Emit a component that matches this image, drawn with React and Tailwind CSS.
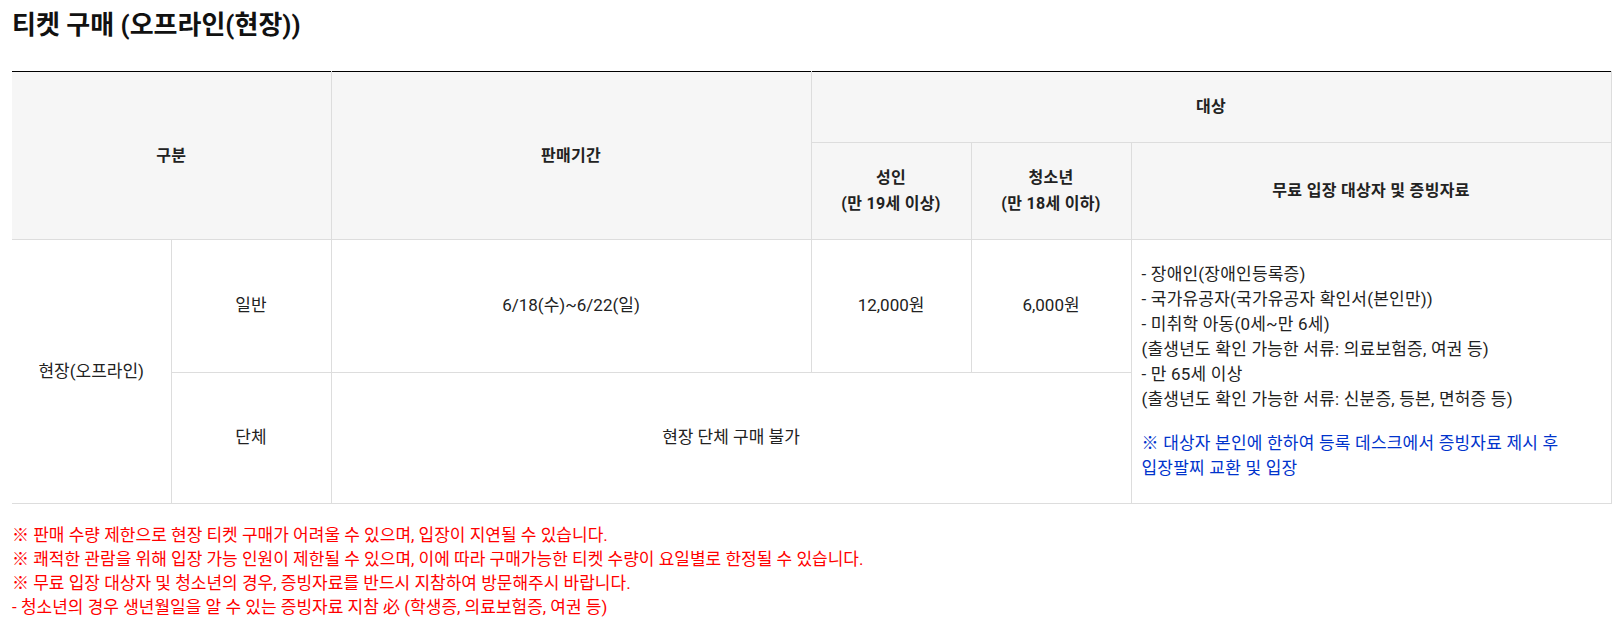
import React from 'react';

const th = 'border-r border-b border-[#dddddd] bg-[#f6f6f6] text-[16px] tracking-[0.3px] font-bold leading-[26px] text-[#222222] py-[22px] align-middle text-center';
const td = 'border-r border-b border-[#dddddd] text-[17px] leading-[25px] text-[#222222] align-middle text-center';

const freeList = [
	'- 장애인(장애인등록증)',
	'- 국가유공자(국가유공자 확인서(본인만))',
	'- 미취학 아동(0세~만 6세)',
	'(출생년도 확인 가능한 서류: 의료보험증, 여권 등)',
	'- 만 65세 이상',
	'(출생년도 확인 가능한 서류: 신분증, 등본, 면허증 등)',
];

const notes = [
	'※ 판매 수량 제한으로 현장 티켓 구매가 어려울 수 있으며, 입장이 지연될 수 있습니다.',
	'※ 쾌적한 관람을 위해 입장 가능 인원이 제한될 수 있으며, 이에 따라 구매가능한 티켓 수량이 요일별로 한정될 수 있습니다.',
	'※ 무료 입장 대상자 및 청소년의 경우, 증빙자료를 반드시 지참하여 방문해주시 바랍니다.',
	'- 청소년의 경우 생년월일을 알 수 있는 증빙자료 지참 必 (학생증, 의료보험증, 여권 등)',
];

export default function App() {
	return (
		<div
			className="min-h-screen bg-white pl-3 pr-[5px] pt-2"
			style={{ fontFamily: 'Roboto, "Noto Sans CJK KR", sans-serif' }}
		>
			<h1 className="text-[26px] font-bold leading-[34px] text-[#111111] mb-[29px]">
				티켓 구매 (오프라인(현장))
			</h1>

			<table className="w-[1599px] table-fixed border-collapse border-t border-t-black">
				<colgroup>
					<col className="w-[159px]" />
					<col className="w-[160px]" />
					<col className="w-[480px]" />
					<col className="w-[160px]" />
					<col className="w-[160px]" />
					<col className="w-[480px]" />
				</colgroup>
				<thead>
					<tr>
						<th colSpan={2} rowSpan={2} className={th}>구분</th>
						<th rowSpan={2} className={th}>판매기간</th>
						<th colSpan={3} className={th}>대상</th>
					</tr>
					<tr>
						<th className={th}>
							성인
							<br />
							(만 19세 이상)
						</th>
						<th className={th}>
							청소년
							<br />
							(만 18세 이하)
						</th>
						<th className={th}>무료 입장 대상자 및 증빙자료</th>
					</tr>
				</thead>
				<tbody>
					<tr className="h-[132px]">
						<td rowSpan={2} className={td}>현장(오프라인)</td>
						<td className={td}>일반</td>
						<td className={td}>6/18(수)~6/22(일)</td>
						<td className={td}>12,000원</td>
						<td className={td}>6,000원</td>
						<td rowSpan={2} className={`${td} !text-left tracking-[0.2px] pl-[10px] pr-3 py-[22px]`}>
							{freeList.map((line) => (
								<div key={line}>{line}</div>
							))}
							<p className="mt-[19px] text-[#0033cc]">
								※ 대상자 본인에 한하여 등록 데스크에서 증빙자료 제시 후
								<br />
								입장팔찌 교환 및 입장
							</p>
						</td>
					</tr>
					<tr className="h-[131px]">
						<td className={td}>단체</td>
						<td colSpan={3} className={td}>현장 단체 구매 불가</td>
					</tr>
				</tbody>
			</table>

			<div className="mt-[19px] text-[17px] leading-[24px] text-[#ff0000]">
				{notes.map((n) => (
					<p key={n}>{n}</p>
				))}
			</div>
		</div>
	);
}
